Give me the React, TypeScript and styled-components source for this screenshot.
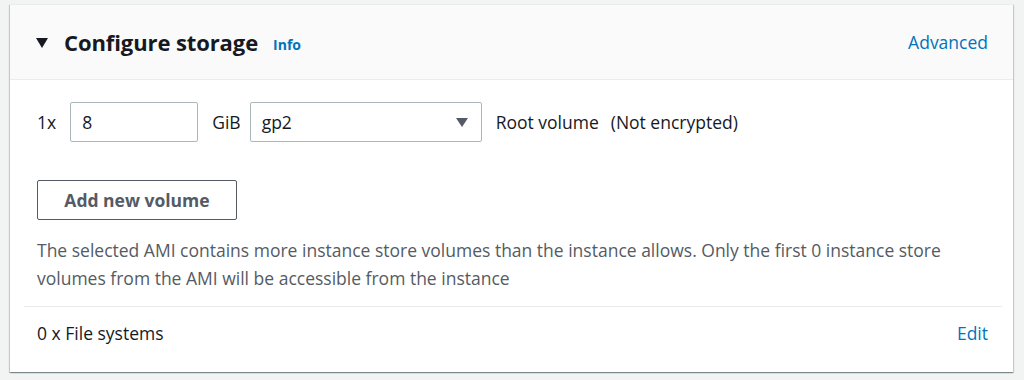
import React from 'react'
import styled, {createGlobalStyle} from 'styled-components'

const Global = createGlobalStyle`
  body {
    margin: 0;
    background: #f2f3f3;
    font-family: "Open Sans", "Noto Sans", Arial, sans-serif;
    color: #16191f;
  }
`
const Page = styled.div`
  padding: 4px 11px 6px 10px;
`
const Card = styled.section`
  background: #fff;
  box-shadow: 0 1px 1px 0 rgba(0, 28, 36, 0.3), 1px 1px 1px 0 rgba(0, 28, 36, 0.15), -1px 1px 1px 0 rgba(0, 28, 36, 0.15);
  border-top: 1px solid #eaeded;
`
const Header = styled.header`
  display: flex;
  align-items: center;
  height: 75px;
  padding: 0 25px 1px 26px;
  box-sizing: border-box;
  background: #fafafa;
  border-bottom: 1px solid #eaeded;
`
const Caret = styled.span`
  width: 0;
  height: 0;
  border-left: 6px solid transparent;
  border-right: 6px solid transparent;
  border-top: 10px solid #16191f;
  margin: 2px 16px 0 0;
`
const Title = styled.h2`
  margin: 0;
  font-size: 22px;
  font-weight: 700;
  letter-spacing: -0.1px;
`
const Link = styled.a<{ $bold?: boolean; $size?: number }>`
  color: #0073bb;
  text-decoration: none;
  font-size: ${p => p.$size ?? 17.5}px;
  font-weight: ${p => (p.$bold ? 700 : 400)};
`
const InfoLink = styled(Link)`
  margin: 5px 0 0 15px;
`
const Spacer = styled.div`
  flex: 1;
`
const Body = styled.div`
  padding: 22px 27px 0 27px;
`
const VolumeRow = styled.div`
  display: flex;
  align-items: center;
  font-size: 17.5px;
`
const Label = styled.span<{ $gap?: number }>`
  margin-right: ${p => p.$gap ?? 14}px;
`
const TextInput = styled.div`
  box-sizing: border-box;
  width: 128px;
  height: 40px;
  border: 1px solid #aab7b8;
  border-radius: 2px;
  padding: 0 11px;
  display: flex;
  align-items: center;
  margin-right: 14px;
`
const Select = styled.div`
  box-sizing: border-box;
  width: 232px;
  height: 40px;
  border: 1px solid #aab7b8;
  border-radius: 2px;
  padding: 0 13px 0 11px;
  display: flex;
  align-items: center;
  justify-content: space-between;
  margin-right: 14px;
`
const SelectCaret = styled.span`
  width: 0;
  height: 0;
  border-left: 6px solid transparent;
  border-right: 6px solid transparent;
  border-top: 9px solid #545b64;
`
const Button = styled.button`
  box-sizing: border-box;
  margin-top: 38px;
  width: 200px;
  height: 40px;
  background: #fff;
  border: 1px solid #545b64;
  border-radius: 2px;
  color: #545b64;
  font-family: inherit;
  font-size: 17.5px;
  font-weight: 700;
`
const Note = styled.p`
  margin: 16px 0 0;
  font-size: 17.5px;
  line-height: 28px;
  color: #545b64;
`
const Divider = styled.hr`
  margin: 14px 11px 0 14px;
  border: 0;
  border-top: 1px solid #eaeded;
`
const Footer = styled.div`
  display: flex;
  align-items: center;
  justify-content: space-between;
  height: 52px;
  padding: 0 25px 13px 27px;
  font-size: 17.5px;
`

export default function App() {
  return (
    <Page>
      <Global/>
      <Card>
        <Header>
          <Caret/>
          <Title>Configure storage</Title>
          <InfoLink $bold $size={14}>Info</InfoLink>
          <Spacer/>
          <Link>Advanced</Link>
        </Header>
        <Body>
          <VolumeRow>
            <Label>1x</Label>
            <TextInput>8</TextInput>
            <Label $gap={9}>GiB</Label>
            <Select>
              <span>gp2</span>
              <SelectCaret/>
            </Select>
            <Label $gap={12}>Root volume</Label>
            <span>(Not encrypted)</span>
          </VolumeRow>
          <Button>Add new volume</Button>
          <Note>
            The selected AMI contains more instance store volumes than the instance allows. Only the first 0 instance store volumes from the AMI will be accessible from the instance
          </Note>
        </Body>
        <Divider/>
        <Footer>
          <span>0 x File systems</span>
          <Link>Edit</Link>
        </Footer>
      </Card>
    </Page>
  )
}
